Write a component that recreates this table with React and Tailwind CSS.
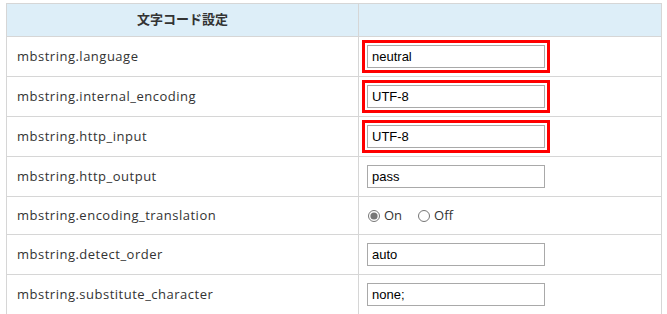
import React from 'react'

const rows = [
  { label: 'mbstring.language', value: 'neutral', marked: true },
  { label: 'mbstring.internal_encoding', value: 'UTF-8', marked: true },
  { label: 'mbstring.http_input', value: 'UTF-8', marked: true },
  { label: 'mbstring.http_output', value: 'pass' },
  { label: 'mbstring.encoding_translation', radio: true },
  { label: 'mbstring.detect_order', value: 'auto' },
  { label: 'mbstring.substitute_character', value: 'none;' },
]

function TextBox({ value }) {
  return (
    <input
      type="text"
      defaultValue={value}
      className="block w-[178px] h-[23px] border border-[#a9a9a9] bg-white px-[4px] text-[13px] text-black outline-none"
      style={{ fontFamily: '"Liberation Sans", Arial, sans-serif' }}
    />
  )
}

export default function App() {
  return (
    <div className="bg-white w-[667px] h-[314px] pt-[3px] pl-[6px]" style={{ fontFamily: '"Open Sans", "Noto Sans CJK JP", sans-serif' }}>
      <table className="border-collapse w-[656px] text-[13px] text-[#333] tracking-[0.5px]">
        <tbody>
          {/* Header */}
          <tr className="h-[33px] bg-[#ddeef8]">
            <th className="w-[352px] border border-[#d6d6d6] font-semibold text-center tracking-normal">文字コード設定</th>
            <th className="border border-[#d6d6d6]"></th>
          </tr>
          {rows.map((r) => (
            <tr key={r.label} className={r.radio ? 'h-[38px]' : 'h-[40px]'}>
              <td className="border border-[#d6d6d6] pl-[10px]">{r.label}</td>
              <td className="border border-[#d6d6d6] pl-[3px] tracking-normal">
                {r.radio ? (
                  <div className="flex items-center pl-[6px] gap-[4px]">
                    <label className="flex items-center gap-[4px]">
                      <input type="radio" name="enc" defaultChecked className="w-[12px] h-[12px] m-0 accent-[#777]" />
                      <span>On</span>
                    </label>
                    <label className="flex items-center gap-[4px] ml-[12px]">
                      <input type="radio" name="enc" className="w-[12px] h-[12px] m-0" />
                      <span>Off</span>
                    </label>
                  </div>
                ) : r.marked ? (
                  <div className="inline-block border-[3px] border-[#ff0000] p-[2px] align-middle">
                    <TextBox value={r.value} />
                  </div>
                ) : (
                  <div className="pl-[5px]">
                    <TextBox value={r.value} />
                  </div>
                )}
              </td>
            </tr>
          ))}
        </tbody>
      </table>
    </div>
  )
}
